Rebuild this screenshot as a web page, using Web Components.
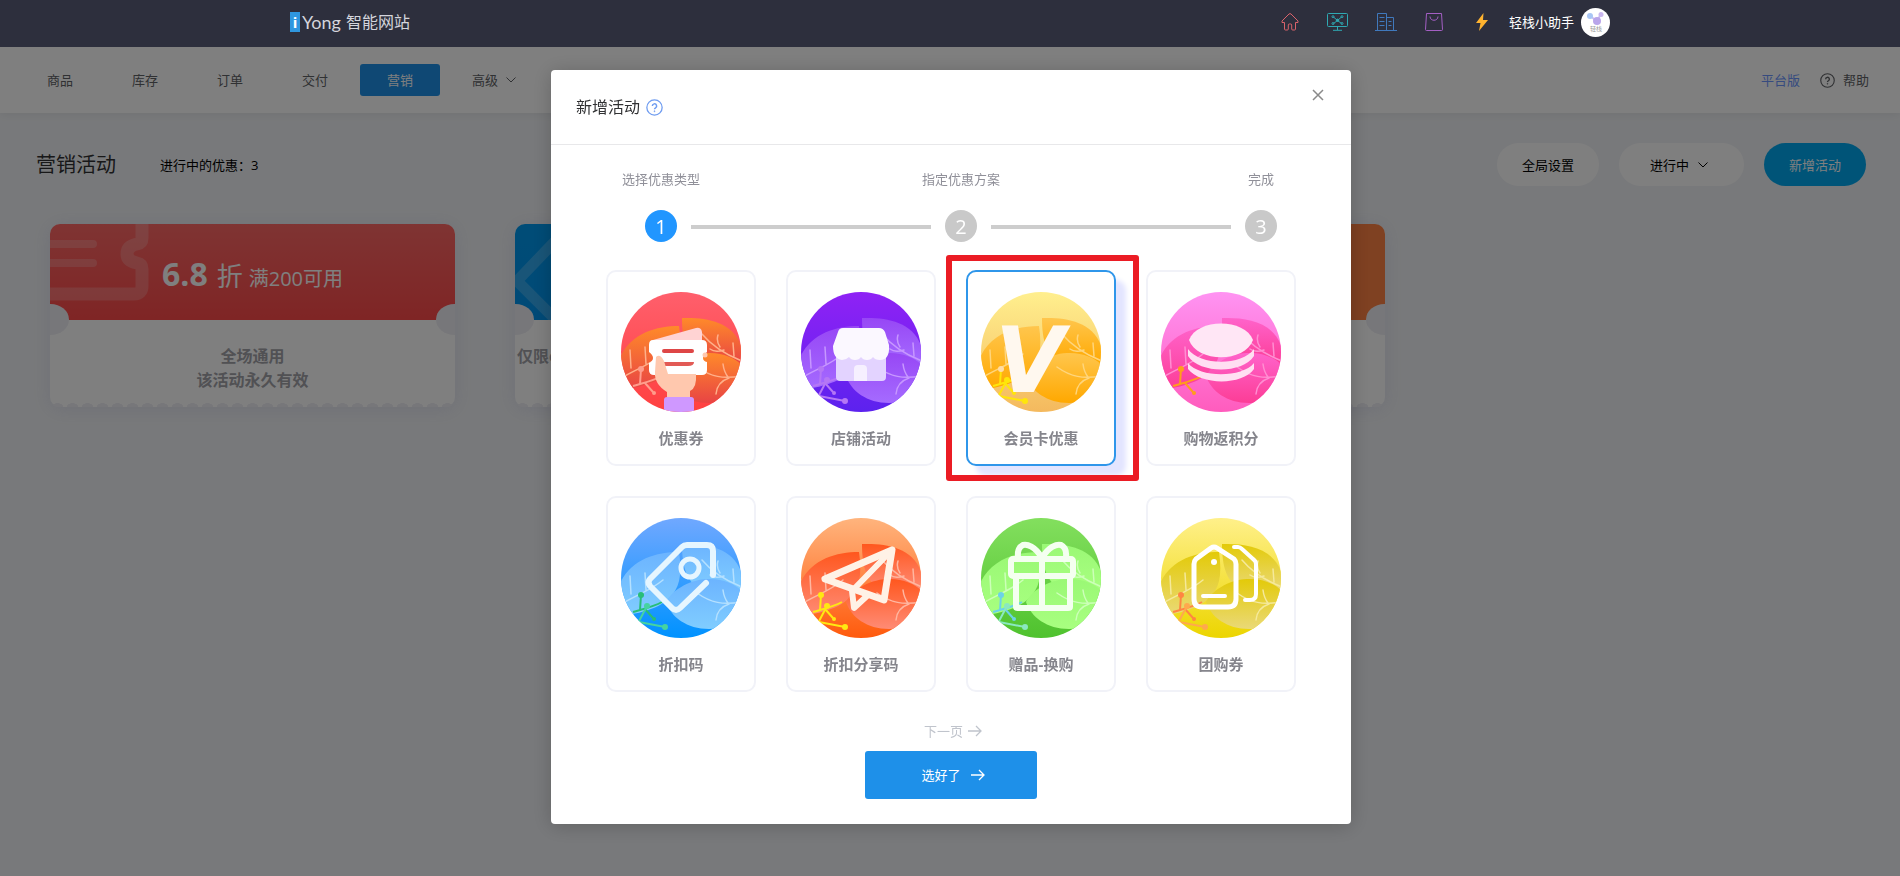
<!DOCTYPE html>
<html lang="zh-CN">
<head>
  <meta charset="utf-8">
  <meta name="viewport" content="width=device-width, initial-scale=1">
  <title>营销活动</title>
  <style>
    body {
      margin: 0;
      min-height: 100vh;
      background: #f1f3f6;
      color: #303133;
      font-family: "Open Sans", "Noto Sans CJK SC", sans-serif;
      font-size: 13px;
      line-height: 20px;
    }
  </style>
</head>
<body>
  <app-header>轻栈小助手</app-header>
  <app-nav></app-nav>
  <main>
    <page-toolbar>
      <span slot="title">营销活动</span>
      <span slot="summary">进行中的优惠：3</span>
    </page-toolbar>
    <card-list>
      <coupon-card pattern="ticket">
        <strong slot="value">6.8</strong>
        <span slot="unit">折</span>
        <span slot="rule">满200可用</span>
        <span slot="scope">全场通用</span>
        <span slot="period">该活动永久有效</span>
      </coupon-card>
      <coupon-card class="blue" pattern="tag">
        <span slot="scope">仅限c</span>
      </coupon-card>
      <coupon-card class="orange"></coupon-card>
    </card-list>
  </main>

  <modal-dialog>
    <span slot="title">新增活动</span>
    <step-bar></step-bar>
    <promo-grid>
      <promo-tile kind="coupon">优惠券</promo-tile>
      <promo-tile kind="shop">店铺活动</promo-tile>
      <promo-tile kind="vip" active>会员卡优惠</promo-tile>
      <promo-tile kind="points">购物返积分</promo-tile>
      <promo-tile kind="code">折扣码</promo-tile>
      <promo-tile kind="share">折扣分享码</promo-tile>
      <promo-tile kind="gift">赠品-换购</promo-tile>
      <promo-tile kind="group">团购券</promo-tile>
    </promo-grid>
  </modal-dialog>

  <script>
    // clase base: monta la plantilla y los estilos de cada componente
    class BaseElement extends HTMLElement {
      constructor() {
        super();
        this.attachShadow({ mode: 'open' });
      }

      render() {
        const template = document.createElement('template');
        template.innerHTML = `
          <style>
            * { box-sizing: border-box; }
            svg { display: block; fill: none; flex: none; }
            button, select { margin: 0; padding: 0; border: 0; background: none; font: inherit; color: inherit; cursor: pointer; }
            a { color: inherit; text-decoration: none; }
            ${this.getStyles()}
          </style>
          ${this.getTemplate()}
        `;
        this.shadowRoot.appendChild(template.content.cloneNode(true));
      }

      connectedCallback() {
        this.render();
      }
    }

    const chevron = `
      <svg width="10" height="6" viewBox="0 0 10 6" stroke="currentColor"><path d="M.5 .5 5 5 9.5 .5"/></svg>
    `;

    const question = size => `
      <svg width="${size}" height="${size}" viewBox="0 0 16 16" stroke="currentColor" stroke-width="1.2">
        <circle cx="8" cy="8" r="7.2"/>
        <path d="M6 6.6a2 2 0 1 1 3 1.7c-.7.4-1 .7-1 1.4" stroke-width="1.4"/>
        <circle cx="8" cy="11.5" r=".5" fill="currentColor" stroke-width=".6"/>
      </svg>
    `;

    const arrow = `
      <svg width="14" height="12" viewBox="0 0 14 12" stroke="currentColor" stroke-width="1.3"><path d="M0 6h13M8 1l5 5-5 5"/></svg>
    `;

    class AppHeader extends BaseElement {
      getTemplate() {
        return `
          <div class="inner">
            <a class="logo" href="#"><b>i</b><span>Yong</span><em>智能网站</em></a>
            <nav>
              <a href="#" aria-label="首页">
                <svg width="18" height="18" viewBox="0 0 18 18" stroke="#d9636b">
                  <path d="M1 9.5V8l7-7q1-.8 2 0l7 7v1.5h-2.5V16q0 1-1 1h-1.8q-1 0-1-1v-4q0-1-1-1H8.300q-1 0-1 1v4q0 1-1 1H4.500q-1 0-1-1V9.500Z"/>
                </svg>
              </a>
              <a href="#" aria-label="网站">
                <svg width="21" height="18" viewBox="0 0 21 18" stroke="#2fa9b3">
                  <rect x=".5" y=".5" width="20" height="13" rx="1"/>
                  <path d="M10.500 13.500V17M6 17.300h9M6.500 4 10.500 7.500l4-3.500M6.500 10.500l4-3 4 3"/>
                  <circle cx="6" cy="3.700" r="1"/><circle cx="15" cy="3.700" r="1"/>
                  <circle cx="6" cy="10.500" r="1"/><circle cx="15" cy="10.500" r="1"/>
                  <circle cx="10.500" cy="7.300" r="1.200" fill="#2fa9b3"/>
                </svg>
              </a>
              <a href="#" aria-label="企业">
                <svg width="22" height="18" viewBox="0 0 22 18" stroke="#4079bd">
                  <path d="M0 17.500h22M2.500 17V.5h9V17M11.500 4.500h7V17M4.500 4.500h5M4.500 8.500h5M4.500 12.500h5M13.500 8.500h3M13.500 12.500h3"/>
                </svg>
              </a>
              <a href="#" aria-label="商城">
                <svg width="18" height="18" viewBox="0 0 18 18" stroke="#a45fc4">
                  <path d="M1.500.5h15l1 16q0 1-1 1H1.500q-1 0-1-1ZM5 3.500c0 5 8 5 8 0"/>
                </svg>
              </a>
              <a href="#" aria-label="快捷">
                <svg width="12" height="18" viewBox="0 0 12 18"><path fill="#ffb32f" d="M7.500 0 0 10h4.500L3 18 12 7H7Z"/></svg>
              </a>
            </nav>
            <div class="user">
              <slot></slot>
              <svg width="29" height="29" viewBox="0 0 29 29">
                <circle cx="14.500" cy="14.500" r="14.500" fill="#fff"/>
                <path d="m9 8 7 5 4-7" stroke="#cdbff0" stroke-width="2"/>
                <circle cx="9" cy="8" r="3" fill="#a9c6f5"/>
                <circle cx="20" cy="6.500" r="2.500" fill="#c9b6ee"/>
                <circle cx="16" cy="13" r="4" fill="#b9a5ea"/>
                <text x="9" y="23" font-size="6" fill="#999">轻栈</text>
              </svg>
            </div>
          </div>
        `;
      }

      getStyles() {
        return `
          :host {
            display: block;
            position: relative;
            z-index: 20;
            height: 47px;
            background: #2d2f3d;
            color: #fff;
          }
          .inner {
            display: flex;
            align-items: center;
            max-width: 1320px;
            height: 44px;
            margin: 0 auto;
          }
          .logo { display: flex; align-items: center; color: #d4d5dc; }
          .logo b { width: 10px; height: 20px; background: #2f97df; color: #fff; font-size: 15px; text-align: center; }
          .logo span { margin: 0 5px 0 2px; font-family: Lato, sans-serif; font-size: 18px; }
          .logo em { font-size: 16px; font-style: normal; }
          nav { display: flex; margin-left: auto; }
          nav a { display: flex; justify-content: center; width: 48px; }
          .user { display: flex; align-items: center; gap: 7px; margin-left: 3px; }
        `;
      }
    }

    class AppNav extends BaseElement {
      getTemplate() {
        const items = ['商品', '库存', '订单', '交付', '营销'];
        return `
          <nav>
            ${items.map(item => `<a href="#" class="${item === '营销' ? 'on' : ''}">${item}</a>`).join('')}
            <button type="button">高级 ${chevron}</button>
          </nav>
          <a class="plan" href="#">平台版</a>
          <a class="help" href="#">${question(15)}帮助</a>
        `;
      }

      getStyles() {
        return `
          :host {
            display: flex;
            align-items: center;
            height: 66px;
            padding: 0 31px 0 20px;
            background: #fff;
            color: #606266;
            box-shadow: 0 2px 8px rgba(0, 0, 0, .06);
          }
          nav { display: flex; gap: 5px; flex: 1; }
          nav a, nav button {
            display: flex;
            align-items: center;
            gap: 8px;
            height: 32px;
            padding: 0 27px;
            border-radius: 3px;
          }
          nav .on { background: #1e90e9; color: #fff; }
          .plan { margin-right: 20px; color: #6d97ff; }
          .help { display: flex; align-items: center; gap: 8px; }
        `;
      }
    }

    class PageToolbar extends BaseElement {
      getTemplate() {
        return `
          <h1><slot name="title"></slot></h1>
          <p><slot name="summary"></slot></p>
          <button type="button">全局设置</button>
          <label>
            <select aria-label="状态"><option>进行中</option></select>
            ${chevron}
          </label>
          <button type="button" class="primary">新增活动</button>
        `;
      }

      getStyles() {
        return `
          :host {
            display: flex;
            align-items: center;
            gap: 20px;
            padding: 30px 34px 38px 36px;
            color: #000;
          }
          h1 { margin: 0 24px 0 0; color: #303133; font-size: 20px; font-weight: 400; line-height: 30px; }
          p { flex: 1; margin: 0; }
          button, label { height: 43px; border-radius: 22px; background: #fff; }
          button { width: 102px; }
          label { position: relative; width: 125px; }
          select { width: 100%; height: 43px; padding: 0 31px; appearance: none; border-radius: 22px; }
          label svg { position: absolute; top: 19px; right: 36px; pointer-events: none; }
          .primary { background: #00a8f0; color: #fff; }
        `;
      }
    }

    class CardList extends BaseElement {
      getTemplate() {
        return '<slot></slot>';
      }

      getStyles() {
        return `
          :host {
            display: grid;
            grid-template-columns: repeat(auto-fill, 405px);
            gap: 40px 60px;
            padding: 0 50px;
          }
        `;
      }
    }

    class CouponCard extends BaseElement {
      getPattern() {
        const patterns = {
          ticket: '<path stroke-width="13" d="M92-2v16q0 5-5 6-10 2-10 10 0 7 10 9 5 1 5 6v17q0 8-8 8H-2"/><path stroke-width="8" stroke-linecap="round" d="M-5 20h48M-5 39h48"/>',
          tag: '<path stroke-width="11" stroke-linejoin="round" d="M48 9 2 57l46 46"/>'
        };
        return patterns[this.getAttribute('pattern')] || '';
      }

      getTemplate() {
        return `
          <header>
            <svg class="pattern" width="110" height="96" viewBox="0 0 110 96" stroke="#fff" stroke-opacity=".2">${this.getPattern()}</svg>
            <slot name="value"></slot>
            <slot name="unit"></slot>
            <slot name="rule"></slot>
            <button type="button" aria-label="更多">
              <svg width="4" height="12" viewBox="0 0 4 12" fill="#fff"><circle cx="2" cy="1.500" r="1.200"/><circle cx="2" cy="6" r="1.200"/><circle cx="2" cy="10.500" r="1.200"/></svg>
            </button>
          </header>
          <div class="body">
            <slot name="scope"></slot>
            <slot name="period"></slot>
          </div>
        `;
      }

      getStyles() {
        return `
          :host {
            --top: #ff6866;
            --bottom: #ff4a4a;
            --edge: #efeff5;
            display: block;
            position: relative;
            height: 183px;
            border-radius: 10px;
            background: #fff;
            box-shadow: 0 2px 18px rgba(90, 90, 180, .12);
          }
          :host(.blue) { --top: #0099ee; --bottom: #0094ee; }
          :host(.orange) { --top: #ff8244; --bottom: #ff8244; }
          :host::before, :host::after {
            content: "";
            position: absolute;
            z-index: 1;
            top: 80px;
            width: 19px;
            height: 31px;
            background: var(--edge);
          }
          :host::before { left: 0; border-radius: 0 19px 19px 0 / 0 16px 16px 0; }
          :host::after { right: 0; border-radius: 19px 0 0 19px / 16px 0 0 16px; }
          header {
            display: flex;
            position: relative;
            justify-content: center;
            align-items: baseline;
            height: 96px;
            padding-top: 30px;
            overflow: hidden;
            border-radius: 10px 10px 0 0;
            background: linear-gradient(var(--top), var(--bottom));
            color: #fff;
          }
          .pattern { position: absolute; top: 0; left: 0; }
          button { position: absolute; top: 16px; right: 27px; }
          ::slotted([slot="value"]) { margin-right: 9px; font-size: 32px; line-height: 40px; }
          ::slotted([slot="unit"]) { margin-right: 6px; font-size: 26px; }
          ::slotted([slot="rule"]) { font-size: 20px; }
          .body {
            display: flex;
            flex-direction: column;
            align-items: center;
            height: 87px;
            padding-top: 24px;
            color: #a2a2a8;
            font-size: 16px;
            font-weight: 700;
            line-height: 24px;
            background: radial-gradient(ellipse 6px 4px at 50% 100%, var(--edge) 90%, transparent) 0 100% / 15px 5px repeat-x;
            border-radius: 0 0 8px 8px;
          }
          :host(.blue) .body { align-items: flex-start; padding-left: 2px; }
        `;
      }
    }

    class ModalDialog extends BaseElement {
      getTemplate() {
        return `
          <section role="dialog" aria-modal="true" aria-labelledby="title">
            <header>
              <h2 id="title"><slot name="title"></slot></h2>
              ${question(17)}
              <button class="close" type="button" aria-label="关闭">
                <svg width="12" height="12" viewBox="0 0 12 12" stroke="currentColor" stroke-width="1.500"><path d="m1 1 10 10M11 1 1 11"/></svg>
              </button>
            </header>
            <div class="content"><slot></slot></div>
            <footer>
              <button class="next" type="button">下一页 ${arrow}</button>
              <button class="done" type="button">选好了 ${arrow}</button>
            </footer>
          </section>
        `;
      }

      getStyles() {
        return `
          :host {
            display: flex;
            position: fixed;
            z-index: 10;
            inset: 0;
            justify-content: center;
            align-items: flex-start;
            padding-top: 70px;
            background: rgba(0, 0, 0, .5);
          }
          section {
            width: 800px;
            max-width: 100%;
            margin-left: 2px;
            border-radius: 4px;
            background: #fff;
            box-shadow: 0 2px 20px rgba(0, 0, 0, .2);
          }
          header {
            display: flex;
            position: relative;
            align-items: center;
            gap: 6px;
            height: 75px;
            padding: 0 25px;
            border-bottom: 1px solid #e8e8ea;
            color: #6f9cf0;
          }
          h2 { margin: 0; color: #303133; font-size: 16px; font-weight: 400; }
          .close { position: absolute; top: 19px; right: 27px; color: #8a8a8a; }
          .content { padding: 24px 55px 0; }
          footer { display: flex; flex-direction: column; align-items: center; padding: 29px 0 25px; }
          footer button { display: flex; align-items: center; justify-content: center; padding-left: 4px; }
          .next { gap: 5px; margin-bottom: 10px; color: #c0c4cc; }
          .done { gap: 10px; width: 172px; height: 48px; border-radius: 3px; background: #1e90e9; color: #fff; }
        `;
      }
    }

    class StepBar extends BaseElement {
      getTemplate() {
        const steps = ['选择优惠类型', '指定优惠方案', '完成'];
        return `
          <ol>
            ${steps.map((step, i) => `<li class="${i ? '' : 'on'}"><span>${step}</span><b>${i + 1}</b></li>`).join('<li class="line"></li>')}
          </ol>
        `;
      }

      getStyles() {
        return `
          :host { display: block; padding: 0 19px 0 39px; }
          ol { display: flex; gap: 14px; margin: 0; padding: 0 0 28px; list-style: none; color: #909099; }
          li { display: flex; flex-direction: column; align-items: center; gap: 21px; width: 32px; white-space: nowrap; }
          b {
            width: 32px;
            height: 32px;
            border-radius: 50%;
            background: #c9c9c9;
            color: #fff;
            font-size: 20px;
            font-weight: 400;
            line-height: 34px;
            text-align: center;
          }
          .on b { background: #2196ff; }
          .line { flex: 1; align-self: flex-end; height: 4px; margin-bottom: 13px; background: #cdcdcd; }
        `;
      }
    }

    class PromoGrid extends BaseElement {
      getTemplate() {
        return '<slot></slot>';
      }

      getStyles() {
        return `
          :host { display: grid; grid-template-columns: repeat(4, 1fr); gap: 30px; }
        `;
      }
    }

    class PromoTile extends BaseElement {
      getTemplate() {
        const active = this.hasAttribute('active');
        return `
          <button type="button" aria-pressed="${active}">
            <promo-icon kind="${this.getAttribute('kind')}"></promo-icon>
            <slot></slot>
          </button>
        `;
      }

      getStyles() {
        return `
          :host { display: block; position: relative; }
          button {
            display: flex;
            flex-direction: column;
            align-items: center;
            gap: 16px;
            width: 100%;
            height: 196px;
            padding-top: 20px;
            border: 2px solid #f1f2f8;
            border-radius: 10px;
            background: #fff;
            color: #85858c;
            font-size: 15px;
            font-weight: 700;
          }
          :host([active]) button { border-color: #2f96ea; box-shadow: 10px 10px 5px #e3e5ff; }
          /* marco rojo alrededor de la tarjeta elegida */
          :host([active])::after {
            content: "";
            position: absolute;
            inset: -15px -23px -15px -20px;
            border: 6px solid #eb1c24;
            border-radius: 3px;
            pointer-events: none;
          }
        `;
      }
    }

    const promoIcons = {
      coupon: {
        base: ['#ff5f6c', '#ff4040'], leaf: ['#ff8a2a', '#e84444'], vein: '#ffb08a', twig: '#ff9d8c', twig2: 'none',
        glyph: `
          <path fill="#ffd3d3" d="m32 48 43-12q5-1 6 4v9H32Z"/>
          <path fill="#fff" d="M32 48h49q5 0 5 5v7q-4 3-4 6t4 4v8q0 5-5 5H33q-5 0-5-5v-7q4-2 4-5t-4-6v-7q0-5 4-5Z"/>
          <rect x="41" y="57" width="32" height="4" rx="2" fill="#de4646"/>
          <path fill="#e25a55" d="M43 70h30q0 4-6 4H43q-4-2 0-4Z"/>
          <path fill="#ffc8ae" d="M35 65q4-4 8 4l4 13h28q1 14-6 17v8H46v-7q-13-8-12-20Z"/>
          <circle cx="84" cy="63" r="2.500" fill="#ffc8ae"/>
          <rect x="43" y="105" width="30" height="18" rx="3" fill="#cf98ff"/>
        `
      },
      shop: {
        base: ['#8f22f5', '#5c22ee'], leaf: ['#9747f5', '#a56bff'], vein: '#c797ff', twig: '#b577f5', twig2: '#b577f5',
        glyph: `
          <rect x="35" y="58" width="50" height="31" rx="4" fill="#e3d3ff"/>
          <path fill="#f6f0ff" d="M53 89V77q0-4 4-4h5q4 0 4 4v12Z"/>
          <path fill="#fbf8ff" d="M42 36h36q4 0 6 4l4 13q1 15-9 15-5 0-7-3-2 3-6 3t-6-3q-2 3-6 3t-6-3q-3 3-7 3-9-1-9-14l5-14q1-4 5-4Z"/>
        `
      },
      vip: {
        base: ['#ffef8e', '#f4b95e'], leaf: ['#ffc64d', '#ffa800'], vein: '#ffd57c', twig: '#ffe60a', twig2: '#ffe60a', dot: '#ffdca6',
        letter: 'V'
      },
      points: {
        base: ['#ff93f2', '#ff5cbd'], leaf: ['#ff63cb', '#fc3d96'], vein: '#ff8ed2', twig: '#ff9d1c', twig2: 'none',
        glyph: `
          <path fill="#ffe6f5" d="M28 48c8-22 56-22 64 0-8 23-56 23-64 0Z"/>
          <path fill="#ffdff2" d="M27 57c12 17 54 17 66 0v7c-12 18-54 18-66 0ZM27 71c12 15 54 15 66 0v6c-12 17-54 16-66 0Z"/>
        `
      },
      code: {
        base: ['#70a8ff', '#0092ff'], leaf: ['#6cb4ff', '#80cdff'], vein: '#b4e0ff', twig: '#28bd78', twig2: '#46d3a0',
        glyph: `
          <g stroke="#e6f6ff" stroke-width="6" stroke-linecap="round" stroke-linejoin="round">
            <path d="M92 57V33q0-6-6-6H66q-3 0-5 2L29 61q-3 3 0 7l22 22q4 4 8 0l26-25"/>
            <circle cx="69" cy="50" r="9" stroke-width="5"/>
          </g>
        `
      },
      share: {
        base: ['#ffb47d', '#ff5a0d'], leaf: ['#ff571e', '#ff8b75'], vein: '#ffb6a0', twig: '#ffe812', twig2: '#ffe812',
        glyph: `
          <g stroke="#fff2e6" stroke-width="7" stroke-linecap="round" stroke-linejoin="round">
            <path d="M91 32 24 61l59 21Z"/>
            <path d="M91 32 51 73l2 17 14-13" stroke-width="6"/>
          </g>
        `
      },
      gift: {
        base: ['#83df5e', '#4fc22e'], leaf: ['#9af875', '#a8ff80'], vein: '#ccffb8', twig: '#6cd2e8', twig2: '#8ae8c0',
        glyph: `
          <g stroke="#f4fff0" stroke-width="6" stroke-linejoin="round" stroke-linecap="round">
            <rect x="30" y="41" width="62" height="17" rx="2"/>
            <path d="M35 59v30q0 1 2 1h50q2 0 2-1V59M61 40v50M61 40C54 28 46 26 42 27q-6 3-5 12M61 40c7-12 15-14 19-13q6 3 5 12"/>
          </g>
        `
      },
      group: {
        base: ['#fff08a', '#ecd500'], leaf: ['#e3ca08', '#ead977'], vein: '#f5e99a', twig: '#ff8642', twig2: '#ffa94d',
        glyph: `
          <g stroke="#fff" stroke-width="5" stroke-linejoin="round" stroke-linecap="round">
            <path d="M50 30q3-2 6 0l17 11q2 2 2 5v35q0 8-8 8H41q-8 0-8-8V46q0-3 2-5Z"/>
            <path d="M42 78h22M73 29h4q2 0 4 2l11 10q3 2 3 5v30q0 6-6 6h-5" stroke-width="4"/>
            <circle cx="53" cy="44" r="3" fill="#fff" stroke="none"/>
          </g>
        `
      }
    };

    class PromoIcon extends BaseElement {
      getTemplate() {
        const icon = promoIcons[this.getAttribute('kind')];
        const dot = icon.dot || icon.twig;
        return `
          <svg width="120" height="120" viewBox="0 0 120 120">
            <defs>
              <linearGradient id="base" x2="0" y2="1"><stop stop-color="${icon.base[0]}"/><stop offset="1" stop-color="${icon.base[1]}"/></linearGradient>
              <linearGradient id="leaf" x2="0" y2="1"><stop stop-color="${icon.leaf[0]}"/><stop offset="1" stop-color="${icon.leaf[1]}"/></linearGradient>
              <clipPath id="round"><circle cx="60" cy="60" r="60"/></clipPath>
            </defs>
            <g clip-path="url(#round)">
              <path fill="url(#base)" d="M0 0h120v120H0Z"/>
              <g fill="url(#leaf)">
                <path d="M58 34C34 34 8 42-2 68v30C25 95 45 88 54 73Q62 60 58 34Z"/>
                <path d="M61 26c26-1 62 4 62 46H80C66 64 61 50 61 26Z"/>
                <path d="M45 84c5-10 21-22 41-23 18-1 32 7 37 15v10c-8 16-22 25-35 25-22 0-38-12-43-27Z"/>
              </g>
              <g stroke="${icon.vein}" stroke-width="1.500" stroke-linecap="round">
                <path d="M81 42c10 12 22 20 40 27M97 43q-2 6 2 12M89 57q5 4 14 1M112 51l1 13M76 75c14 10 26 12 44 9M102 72q1 8 5 13M108 86q-12 4-13 16"/>
                <path d="M4 84c12-7 26-12 38-22M9 58l1 18M24 55l1 17"/>
              </g>
              <g stroke="${icon.twig}" stroke-width="2">
                <path d="M12 94c10-3 20-5 29-10M20 77l-1 15M24 91l8 9"/>
                <circle cx="33" cy="101" r="2" fill="${icon.twig}" stroke="none"/>
                <circle cx="20" cy="77" r="3" fill="${dot}" stroke="none"/>
              </g>
              <g stroke="${icon.twig2}" stroke-width="2">
                <path d="M26 88l-9 17M18 104l26 5"/>
                <circle cx="26" cy="88" r="2" fill="${icon.twig2}"/>
                <circle cx="44" cy="109" r="2" fill="${icon.twig2}"/>
              </g>
              ${icon.glyph || ''}
            </g>
            ${icon.letter ? `<text x="14" y="100">${icon.letter}</text>` : ''}
          </svg>
        `;
      }

      getStyles() {
        return `
          :host { display: block; }
          svg { overflow: visible; }
          text { fill: #fff8ef; font: italic 700 90px "DejaVu Sans", sans-serif; }
        `;
      }
    }

    customElements.define('app-header', AppHeader);
    customElements.define('app-nav', AppNav);
    customElements.define('page-toolbar', PageToolbar);
    customElements.define('card-list', CardList);
    customElements.define('coupon-card', CouponCard);
    customElements.define('modal-dialog', ModalDialog);
    customElements.define('step-bar', StepBar);
    customElements.define('promo-grid', PromoGrid);
    customElements.define('promo-tile', PromoTile);
    customElements.define('promo-icon', PromoIcon);
  </script>
</body>
</html>
